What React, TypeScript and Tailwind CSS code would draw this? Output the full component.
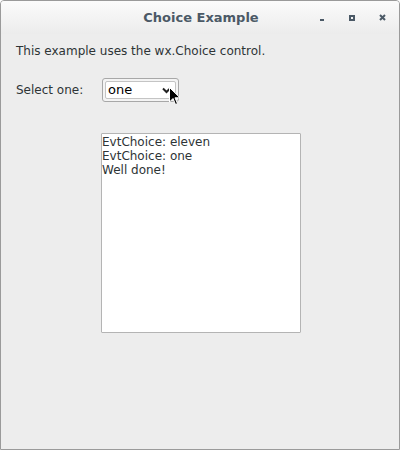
export default function App() {
  return (
    <div
      className="w-[400px] h-[450px] bg-[#ededed] border border-[#9a9a9a] rounded-t-[4px] flex flex-col overflow-hidden"
      style={{ fontFamily: '"DejaVu Sans", sans-serif' }}
    >
      {/* title bar */}
      <div className="h-[33px] shrink-0 bg-gradient-to-b from-[#fbfbfb] to-[#ececec] flex items-center relative">
        <div className="flex-1 text-center text-[13px] font-bold text-[#4b5966] pl-[2px]">
          Choice Example
        </div>
        <div className="absolute right-0 top-0 h-full flex items-center">
          <div className="w-[30px] flex justify-center">
            <div className="w-[4px] h-[2px] bg-[#4b5966] mt-[4px]" />
          </div>
          <div className="w-[30px] flex justify-center">
            <div className="w-[6px] h-[6px] border-2 border-[#4b5966]" />
          </div>
          <div className="w-[32px] flex justify-center pr-[2px]">
            <svg width="7" height="7" viewBox="0 0 7 7">
              <path d="M1 1 L6 6 M6 1 L1 6" stroke="#4b5966" strokeWidth="2" />
            </svg>
          </div>
        </div>
      </div>

      {/* content */}
      <div className="flex flex-col pl-[15px] pt-[8px] text-[12px] text-[#2e3436]">
        <div className="h-[18px] leading-[18px]">This example uses the wx.Choice control.</div>

        <div className="flex items-center mt-[18px]">
          <div className="w-[86px]">Select one:</div>
          <div className="relative w-[77px] h-[24px] rounded-[3px] border border-[#a8a8a8] bg-[#f4f4f4] p-[2px]">
            <div className="h-full border border-[#c4c4c4] bg-white rounded-[2px] flex items-center pl-[2px] text-black text-[13px]">
              one
            </div>
            <svg
              className="absolute left-[59px] top-[8px]"
              width="9"
              height="7"
              viewBox="0 0 9 7"
            >
              <path d="M1 1.5 L4.5 5 L8 1.5" stroke="#222" strokeWidth="2" fill="none" />
            </svg>
            {/* mouse pointer */}
            <svg
              className="absolute left-[66px] top-[8px]"
              width="12"
              height="19"
              viewBox="0 0 12 19"
            >
              <path
                d="M0.5 0.5 L0.5 15 L4 11.5 L6.5 17.5 L8.5 16.6 L6 10.8 L11 10.8 Z"
                fill="#000"
                stroke="#fff"
                strokeWidth="1"
              />
            </svg>
          </div>
        </div>

        <div className="ml-[85px] mt-[31px] w-[200px] h-[200px] bg-white border border-[#b4b4b4] rounded-[1px] text-[12px] leading-[14px] text-[#2e3436] pt-[1px]">
          <div>EvtChoice: eleven</div>
          <div>EvtChoice: one</div>
          <div>Well done!</div>
        </div>
      </div>
    </div>
  );
}
